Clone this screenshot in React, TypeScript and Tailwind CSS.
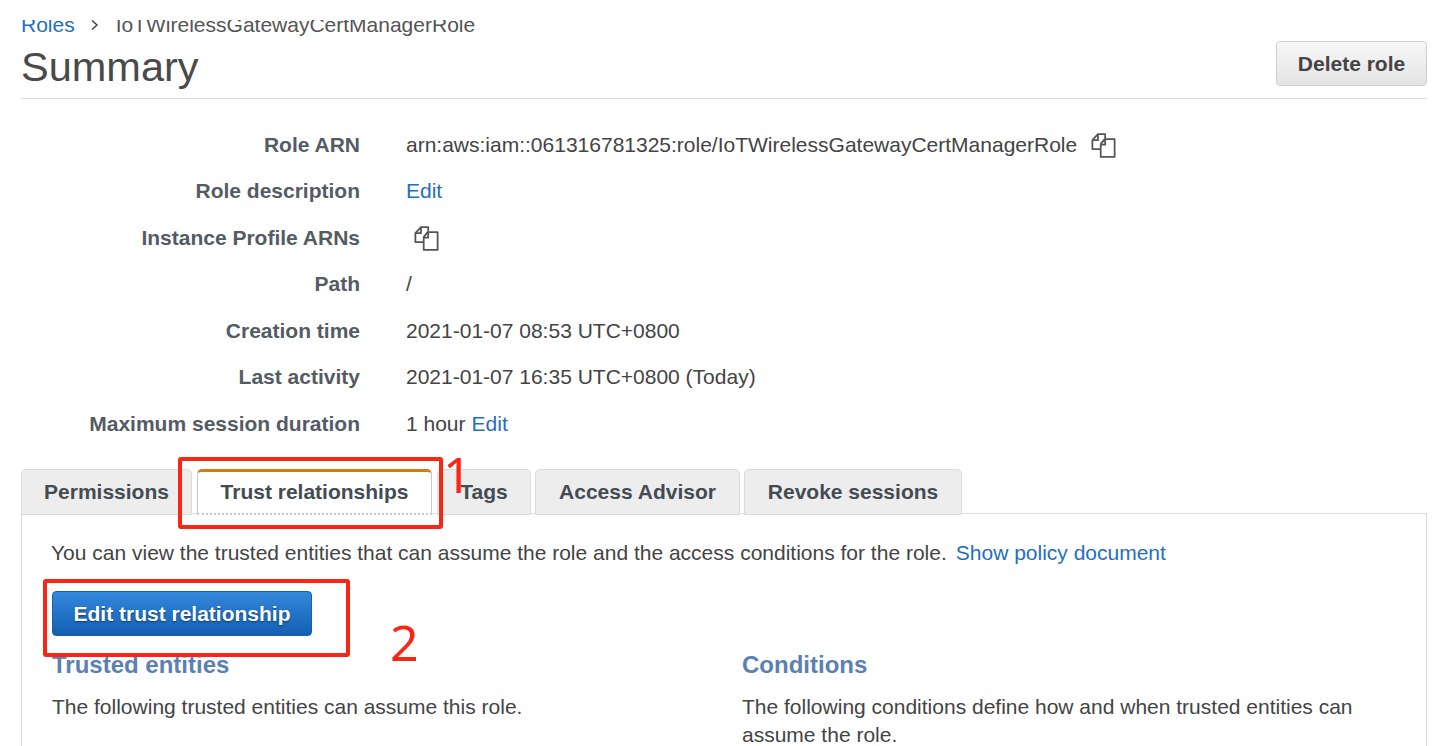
const FONT = "font-['Liberation_Sans',Arial,sans-serif]";

function CopyIcon() {
  return (
    <svg width="25" height="25" viewBox="1.5 1 22 22.5" fill="none" stroke="#555" strokeWidth="1.6" strokeLinejoin="round">
      <path d="M11 15.5H2.5V7.5L7.5 2H14V6" />
      <path d="M7.5 2.5V7.5H3" />
      <path d="M13.5 6.5H22.5V22.5H10V11Z" fill="#fff" />
      <path d="M14 6.5V11.5H10" />
    </svg>
  );
}

function Row({ label, children }: { label: string; children: React.ReactNode }) {
  return (
    <div className="flex h-[46.5px] items-center">
      <div className="w-[339px] text-right font-bold text-[#545b64]">{label}</div>
      <div className="ml-[46px] flex items-center text-[#444]">{children}</div>
    </div>
  );
}

function Tab({ label, w, active }: { label: string; w: string; active?: boolean }) {
  if (active) {
    return (
      <div className={`relative z-10 flex h-[46px] items-center justify-center rounded-t-[5px] border-x border-x-[#c8c8c8] border-t-[3px] border-t-[#dd7a0c] border-b-2 border-b-[#c9c9c9] [border-bottom-style:dotted] bg-white font-bold text-[#444b52] ${w}`}>
        {label}
      </div>
    );
  }
  return (
    <div className={`flex h-[46px] items-center justify-center rounded-t-[5px] border border-[#dcdcdc] bg-[#ededed] font-bold text-[#444b52] ${w}`}>
      {label}
    </div>
  );
}

export default function App() {
  return (
    <div className={`${FONT} relative h-[746px] w-[1432px] overflow-hidden bg-white pl-[21px] pr-[5px] text-[21px] text-[#444]`}>
      <div className="h-[20px]" />
      <div className="h-[17px] overflow-hidden">
        <div className="-mt-[6px] flex h-[22px] items-center leading-[22px]">
          <span className="text-[#1f6fc0]">Roles</span>
          <svg className="ml-[15px]" width="10" height="12" viewBox="0 0 10 12" fill="none" stroke="#444" strokeWidth="1.5">
            <path d="M2 1.5L7 6L2 10.5" />
          </svg>
          <span className="ml-[16px] text-[#555]">IoTWirelessGatewayCertManagerRole</span>
        </div>
      </div>

      <div className="flex h-[62px] items-start justify-between border-b border-[#dcdcdc]">
        <div className="mt-[5px] text-[41.5px] leading-[50px] text-[#4a4a4a]">Summary</div>
        <button className="mt-[4px] h-[45px] w-[151px] rounded-[4px] border border-[#d0d0d0] bg-gradient-to-b from-[#f8f8f8] to-[#e3e3e3] text-[21px] font-bold text-[#444]">
          Delete role
        </button>
      </div>

      <div className="pt-[22px]">
        <Row label="Role ARN">
          <span>arn:aws:iam::061316781325:role/IoTWirelessGatewayCertManagerRole</span>
          <span className="ml-[14px] mt-[3px]"><CopyIcon /></span>
        </Row>
        <Row label="Role description">
          <span className="text-[#1f6fc0]">Edit</span>
        </Row>
        <Row label="Instance Profile ARNs">
          <span className="ml-[8px] mt-[3px]"><CopyIcon /></span>
        </Row>
        <Row label="Path">/</Row>
        <Row label="Creation time">2021-01-07 08:53 UTC+0800</Row>
        <Row label="Last activity">2021-01-07 16:35 UTC+0800 (Today)</Row>
        <Row label="Maximum session duration">
          <span>1 hour</span>
          <span className="ml-[6px] text-[#1f6fc0]">Edit</span>
        </Row>
      </div>

      <div className="relative z-10 mt-[22px] flex h-[46px] items-start">
        <Tab label="Permissions" w="w-[171px]" />
        <div className="ml-[5px]"><Tab label="Trust relationships" w="w-[235px]" active /></div>
        <div className="ml-[5px]"><Tab label="Tags" w="w-[94px]" /></div>
        <div className="ml-[4px]"><Tab label="Access Advisor" w="w-[205px]" /></div>
        <div className="ml-[4px]"><Tab label="Revoke sessions" w="w-[218px]" /></div>
      </div>

      <div className="-mt-[2px] h-[300px] border border-[#dcdcdc] pl-[29px] pt-[24px]">
        <div className="flex h-[30px] items-center">
          <span>You can view the trusted entities that can assume the role and the access conditions for the role.</span>
          <span className="ml-[9px] text-[#1f6fc0]">Show policy document</span>
        </div>
        <button className="mt-[23px] ml-px h-[45px] w-[260px] rounded-[4px] border border-[#1c5ea8] bg-gradient-to-b from-[#3388dc] to-[#1160b4] pt-[2px] text-[21px] font-bold text-white [text-shadow:0_1px_2px_#0a3a70]">
          Edit trust relationship
        </button>
        <div className="mt-[14px] ml-px grid grid-cols-[690px_1fr]">
          <div>
            <div className="text-[24px] font-bold leading-[30px] text-[#5b80b2]">Trusted entities</div>
            <div className="mt-[13px] leading-[28px]">The following trusted entities can assume this role.</div>
          </div>
          <div>
            <div className="text-[24px] font-bold leading-[30px] text-[#5b80b2]">Conditions</div>
            <div className="mt-[13px] w-[640px] leading-[28px]">The following conditions define how and when trusted entities can assume the role.</div>
          </div>
        </div>
      </div>

      <div className="absolute left-[178px] top-[457px] z-20 h-[72px] w-[265px] rounded-[3px] border-[4px] border-[#fb2516]" />
      <div className="absolute left-[43px] top-[579px] z-20 h-[78px] w-[307px] rounded-[3px] border-[4px] border-[#fb2516]" />
      <div className="absolute left-[443px] top-[446px] z-20 text-[50px] leading-[56px] text-[#fb2516] font-['Noto_Sans',sans-serif]">1</div>
      <div className="absolute left-[390px] top-[610px] z-20 text-[50px] leading-[64px] text-[#fb2516] font-['Noto_Sans',sans-serif]">2</div>
    </div>
  );
}
